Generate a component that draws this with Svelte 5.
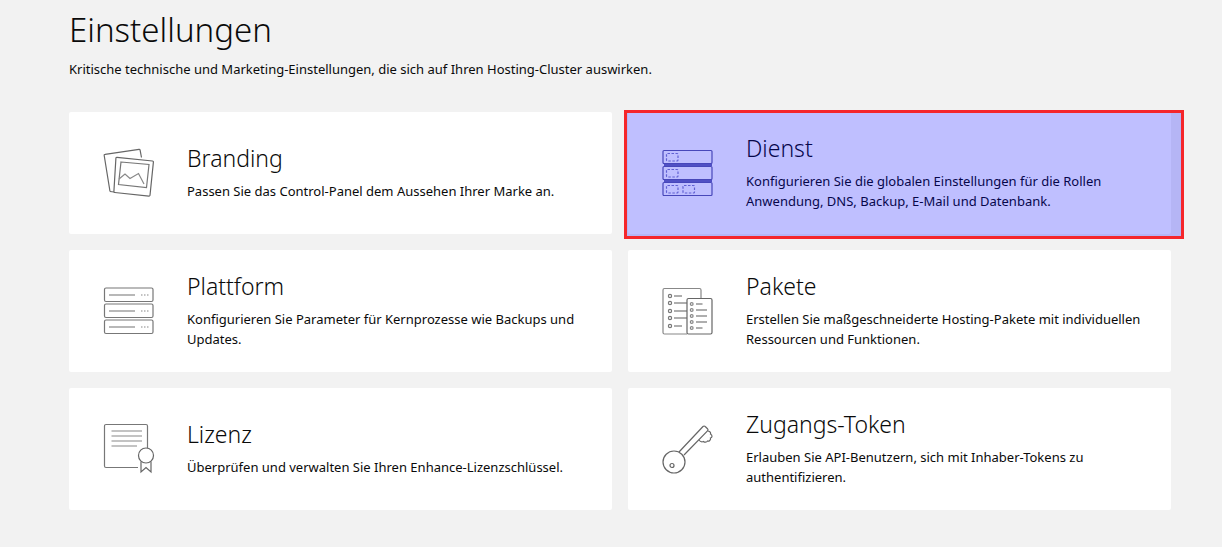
<script>
  const cards = [
    { title: 'Branding', text: 'Passen Sie das Control-Panel dem Aussehen Ihrer Marke an.', icon: 'photo' },
    { title: 'Dienst', text: 'Konfigurieren Sie die globalen Einstellungen für die Rollen Anwendung, DNS, Backup, E-Mail und Datenbank.', icon: 'service', selected: true },
    { title: 'Plattform', text: 'Konfigurieren Sie Parameter für Kernprozesse wie Backups und Updates.', icon: 'server' },
    { title: 'Pakete', text: 'Erstellen Sie maßgeschneiderte Hosting-Pakete mit individuellen Ressourcen und Funktionen.', icon: 'packages' },
    { title: 'Lizenz', text: 'Überprüfen und verwalten Sie Ihren Enhance-Lizenzschlüssel.', icon: 'license' },
    { title: 'Zugangs-Token', text: 'Erlauben Sie API-Benutzern, sich mit Inhaber-Tokens zu authentifizieren.', icon: 'key' }
  ];
</script>

<main class="page">
  <h1>Einstellungen</h1>
  <p class="lead">Kritische technische und Marketing-Einstellungen, die sich auf Ihren Hosting-Cluster auswirken.</p>
  <div class="grid">
    {#each cards as c}
      <article class="card" class:selected={c.selected}>
        <svg class="icon" viewBox="0 0 52 52" width="52" height="52" fill="none" stroke="#666" stroke-width="1.2">
          {#if c.icon === 'photo'}
            <path d="M7 44.500 1.200 8.500a1 1 0 0 1 .9-1.200L36 2.300a1 1 0 0 1 1.100.8l1.400 7.400" />
            <path d="M7 44.500 11 45" />
            <path d="M14 10.300 49.500 14a1 1 0 0 1 .9 1.100L47 48.200a1 1 0 0 1-1.100.9L11.800 45.500a1 1 0 0 1-.9-1.100L12.900 11.200a1 1 0 0 1 1.100-.9Z" />
            <path d="M18 15 46 17.500 43.500 40.500 15.500 37.500Z" stroke="#777" />
            <path d="M16 32l6-5 5 4.500 8.500-5L41 37" stroke="#888" />
          {:else if c.icon === 'server'}
            {#each [0, 16, 32] as y}
              <rect x="1.500" y={y + 3} width="48.500" height="13.500" rx="1.500" stroke="#777" />
              <path d={`M6 ${y + 10}H32`} stroke="#888" />
              <path d={`M38 ${y + 10}h8.500`} stroke="#888" stroke-dasharray="1.500 1.500" />
            {/each}
          {:else if c.icon === 'service'}
            <path d="M2 17.800H50M2 33.800H50" stroke="#6b6bb0" stroke-width="2.400" />
            {#each [0, 16, 32] as y}
              <rect x="1" y={y + 3.500} width="49" height="13" rx="1" stroke="#5f5fa3" />
              <rect x="4.500" y={y + 6.500} width="11.500" height="7.500" rx="1" stroke="#8080c4" stroke-dasharray="2.500 1.500" />
            {/each}
            <rect x="21" y="38.500" width="11.500" height="7.500" rx="1" stroke="#8080c4" stroke-dasharray="2.500 1.500" />
          {:else if c.icon === 'packages'}
            <path d="M25 49H2.500A1.500 1.500 0 0 1 1 47.500V5A1.500 1.500 0 0 1 2.500 3.500h35A1.500 1.500 0 0 1 39 5v8" stroke="#888" />
            {#each [11, 18, 26, 33, 41] as y, i}
              <circle cx="8" cy={y} r="1.600" stroke="#777" />
              <path d={`M12 ${y}H${i === 0 || i === 4 ? 20 : 25}`} stroke="#777" />
            {/each}
            <rect x="25" y="13.500" width="25" height="35.500" rx="1.500" stroke="#666" />
            {#each [19, 25, 31, 37, 43] as y, i}
              <circle cx="29.700" cy={y} r="1.400" stroke="#888" />
              <path d={`M34 ${y}H${i === 0 || i === 4 ? 40.500 : 45}`} stroke="#777" />
            {/each}
          {:else if c.icon === 'license'}
            <path d="M35 44.500H3A1.500 1.500 0 0 1 1.500 43V3A1.500 1.500 0 0 1 3 1.500h40A1.500 1.500 0 0 1 44.500 3v22" stroke="#777" />
            <path d="M8.500 8H39M8.500 13H39M8.500 18H39M8.500 23H34" stroke="#888" />
            <circle cx="43" cy="32.500" r="7.500" />
            <path d="M38 38.500V49L43 44.500 48 49V38.500" />
          {:else}
            <circle cx="12" cy="39" r="11" />
            <circle cx="10" cy="42.500" r="2" />
            <path d="M17 29 41 3.500a1.500 1.500 0 0 1 2.200 0l2.300 2.200a1.500 1.500 0 0 1 0 2.100L22 32" />
            <path d="M46 8c2.500 .5 3 2 2.500 3 2 1 2 3.500 0 4 .5 2-1.500 3.500-3 3-1 1.500-3 1.500-4 .5-2 .8-3.500 0-4.500-1.500" />
          {/if}
        </svg>
        <div class="body">
          <h2>{c.title}</h2>
          <p>{c.text}</p>
        </div>
        {#if c.selected}<div class="mark"></div>{/if}
      </article>
    {/each}
  </div>
</main>

<style>
  :global(body) {
    margin: 0;
    background: #f2f2f2;
    color: #0a0a0a;
    font-family: "Noto Sans", sans-serif;
  }
  .page {
    width: 1102px;
    padding-left: 69px;
  }
  h1 {
    margin: 0;
    padding-top: 8px;
    font-size: 33px;
    line-height: 44px;
    font-weight: 300;
  }
  .lead {
    margin: 7px 0 0;
    font-size: 13px;
    line-height: 20px;
  }
  .grid {
    display: grid;
    grid-template-columns: 543px 543px;
    grid-auto-rows: 122px;
    gap: 16px;
    margin-top: 33px;
  }
  .card {
    position: relative;
    display: flex;
    align-items: center;
    background: #fff;
    border-radius: 2px;
    padding-left: 34px;
  }
  .icon {
    flex: none;
  }
  .body {
    margin-left: 32px;
    width: 405px;
    padding-bottom: 4px;
  }
  h2 {
    margin: 0 0 7px;
    font-size: 23px;
    line-height: 32px;
    font-weight: 300;
  }
  .body p {
    margin: 0;
    font-size: 13px;
    line-height: 20px;
  }
  .mark {
    position: absolute;
    left: -4px;
    top: -2px;
    width: 554px;
    height: 123px;
    border: 3px solid #f5262b;
    background: rgba(0, 0, 255, 0.25);
  }
</style>
